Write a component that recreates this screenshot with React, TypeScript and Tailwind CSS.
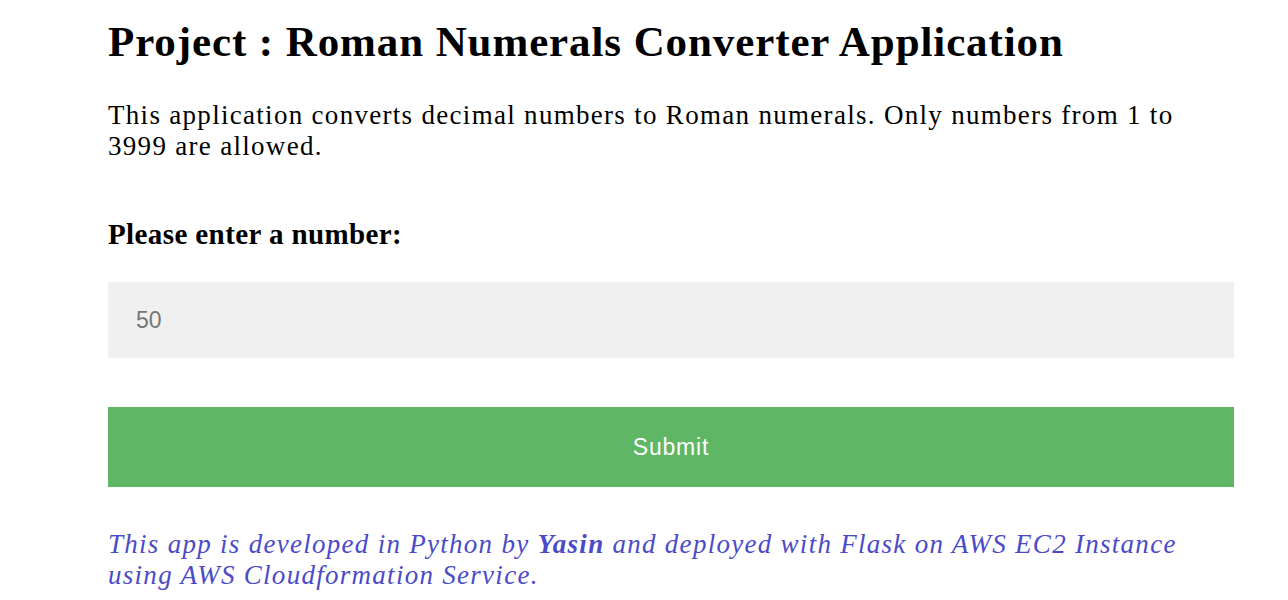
import React from "react";

export default function App() {
  return (
    <div className="min-h-[600px] bg-white">
      <div className="ml-[108px] w-[1126px] font-['Liberation_Serif',serif] text-black">
        <h1 className="pt-[18px] text-[43px] font-bold leading-[48px] tracking-[0.9px]">
          Project : Roman Numerals Converter Application
        </h1>
        <p className="mt-[34px] text-[27px] leading-[31px] tracking-[1.3px]">
          This application converts decimal numbers to Roman numerals. Only numbers from 1 to 3999 are allowed.
        </p>
        <h3 className="mt-[55px] text-[29px] font-bold leading-[34px] tracking-[0.4px]">Please enter a number:</h3>
        <div className="mt-[31px] flex h-[76px] items-center bg-[#f0f0f0] px-[28px] font-['Liberation_Sans',sans-serif] text-[23px] text-[#777777]">
          50
        </div>
        <button className="mt-[49px] flex h-[80px] w-full items-center justify-center bg-[#5fb665] font-['Liberation_Sans',sans-serif] text-[23px] tracking-[0.8px] text-white">
          Submit
        </button>
        <p className="mt-[42px] text-[27px] italic leading-[31px] tracking-[1.28px] text-[#4b4bc8]">
          This app is developed in Python by <b>Yasin</b> and deployed with Flask on AWS EC2 Instance using AWS Cloudformation Service.
        </p>
      </div>
    </div>
  );
}
